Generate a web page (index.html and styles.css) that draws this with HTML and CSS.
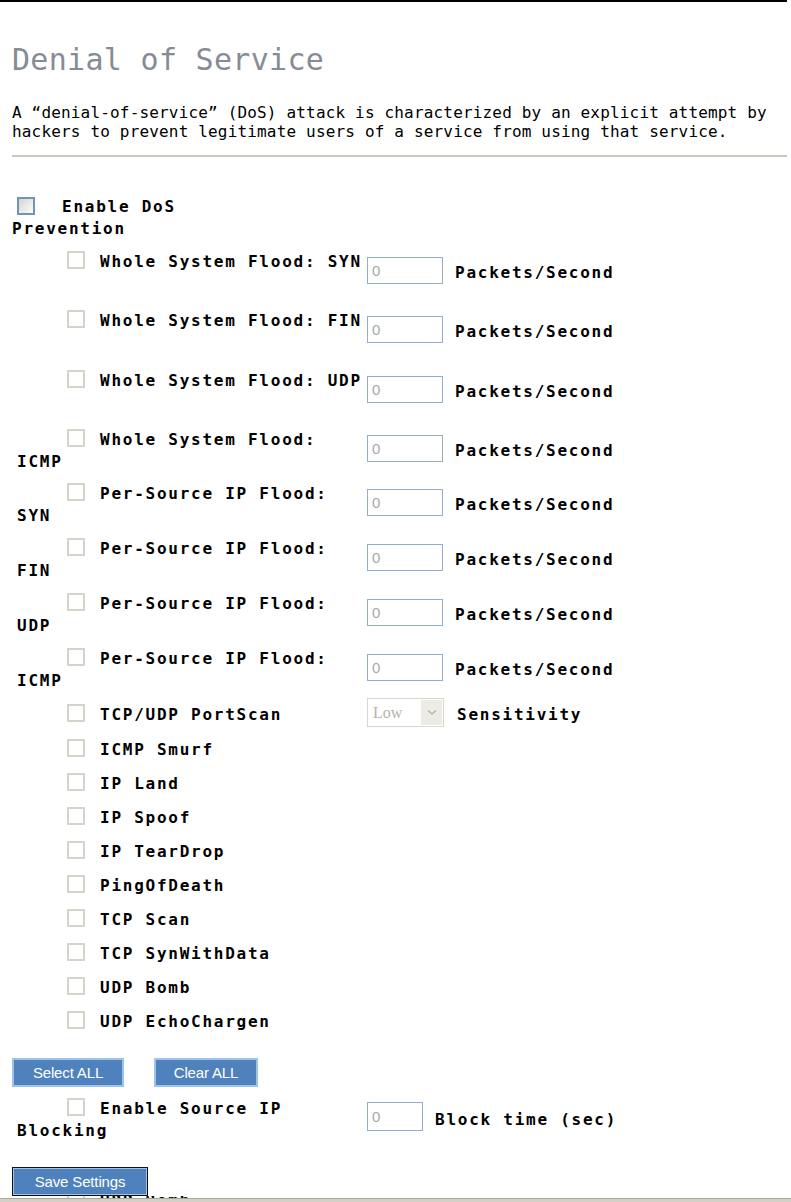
FILE: index.html
```html
<!DOCTYPE html>
<html>
<head>
<meta charset="utf-8">
<title>Denial of Service</title>
<link rel="stylesheet" href="styles.css">
</head>
<body>
<div class="topbar"></div>
<div class="content">
  <h1 class="title">Denial of Service</h1>
  <p class="desc">A “denial-of-service” (DoS) attack is characterized by an explicit attempt by<br>hackers to prevent legitimate users of a service from using that service.</p>
  <div class="rule"></div>

  <div class="enable lbl"><span class="cb cb-on"></span>Enable DoS<br>Prevention</div>

  <div class="frow m11">
    <div class="lab lbl"><span class="cb"></span>Whole System Flood: SYN</div>
    <input class="field" type="text" value="0" disabled>
    <span class="unit lbl">Packets/Second</span>
  </div>
  <div class="frow m15">
    <div class="lab lbl"><span class="cb"></span>Whole System Flood: FIN</div>
    <input class="field" type="text" value="0" disabled>
    <span class="unit lbl">Packets/Second</span>
  </div>
  <div class="frow m16">
    <div class="lab lbl"><span class="cb"></span>Whole System Flood: UDP</div>
    <input class="field" type="text" value="0" disabled>
    <span class="unit lbl">Packets/Second</span>
  </div>
  <div class="frow m15">
    <div class="lab lbl"><span class="cb"></span>Whole System Flood:<br>ICMP</div>
    <input class="field" type="text" value="0" disabled>
    <span class="unit lbl">Packets/Second</span>
  </div>
  <div class="frow m10">
    <div class="lab lbl"><span class="cb"></span>Per-Source IP Flood:<br>SYN</div>
    <input class="field" type="text" value="0" disabled>
    <span class="unit lbl">Packets/Second</span>
  </div>
  <div class="frow m11">
    <div class="lab lbl"><span class="cb"></span>Per-Source IP Flood:<br>FIN</div>
    <input class="field" type="text" value="0" disabled>
    <span class="unit lbl">Packets/Second</span>
  </div>
  <div class="frow m11">
    <div class="lab lbl"><span class="cb"></span>Per-Source IP Flood:<br>UDP</div>
    <input class="field" type="text" value="0" disabled>
    <span class="unit lbl">Packets/Second</span>
  </div>
  <div class="frow m11">
    <div class="lab lbl"><span class="cb"></span>Per-Source IP Flood:<br>ICMP</div>
    <input class="field" type="text" value="0" disabled>
    <span class="unit lbl">Packets/Second</span>
  </div>

  <div class="frow m6">
    <div class="lab lab-one lbl"><span class="cb"></span>TCP/UDP PortScan</div>
    <div class="sel">
      <span class="sel-text">Low</span>
      <span class="sel-arrow"><svg width="10" height="7" viewBox="0 0 10 7"><path d="M1 1.5 L5 5 L9 1.5" fill="none" stroke="#b9b7b0" stroke-width="1.6"/></svg></span>
    </div>
    <span class="unit unit-sens lbl">Sensitivity</span>
  </div>

  <div class="srow lbl m8"><span class="cb"></span>ICMP Smurf</div>
  <div class="srow lbl m12"><span class="cb"></span>IP Land</div>
  <div class="srow lbl m12"><span class="cb"></span>IP Spoof</div>
  <div class="srow lbl m12"><span class="cb"></span>IP TearDrop</div>
  <div class="srow lbl m12"><span class="cb"></span>PingOfDeath</div>
  <div class="srow lbl m12"><span class="cb"></span>TCP Scan</div>
  <div class="srow lbl m12"><span class="cb"></span>TCP SynWithData</div>
  <div class="srow lbl m12"><span class="cb"></span>UDP Bomb</div>
  <div class="srow lbl m12"><span class="cb"></span>UDP EchoChargen</div>

  <div class="btns">
    <button class="btn btn-select" type="button">Select ALL</button>
    <button class="btn btn-clear" type="button">Clear ALL</button>
  </div>

  <div class="frow m11">
    <div class="lab lbl"><span class="cb"></span>Enable Source IP<br>Blocking</div>
    <input class="field field-short" type="text" value="0" disabled>
    <span class="unit lbl">Block time (sec)</span>
  </div>

  <div class="save-row">
    <button class="btn btn-save" type="button">Save Settings</button>
  </div>
  <div class="ghost">
    <div class="ghost-inner srow lbl"><span class="cb"></span>UDP Bomb</div>
  </div>
</div>
<div class="bottom"></div>
</body>
</html>
```
FILE: styles.css
```css
html, body {
  margin: 0;
  padding: 0;
  background: #ffffff;
  color: #000000;
  font-family: "DejaVu Sans Mono", monospace;
}

.topbar {
  width: 787px;
  height: 2px;
  background: #000000;
}

.content {
  width: 787px;
  box-sizing: border-box;
  padding-left: 12px;
}

.title {
  margin: 40px 0 0;
  font-size: 30px;
  line-height: 36px;
  font-weight: normal;
  color: #868c96;
  letter-spacing: 0.3px;
}

.desc {
  margin: 25px 0 0;
  font-size: 16px;
  line-height: 19px;
  letter-spacing: 0.17px;
}

.rule {
  margin-top: 14px;
  height: 2px;
  background: #ccc8bf;
}

.lbl {
  font-size: 16px;
  font-weight: bold;
  line-height: 22px;
  letter-spacing: 1.75px;
  white-space: nowrap;
}

.cb {
  display: inline-block;
  width: 18px;
  height: 18px;
  box-sizing: border-box;
  border: 2px solid #d6d3ca;
  background: #ffffff;
  vertical-align: top;
  margin-left: 50px;
  margin-right: 15px;
}

.enable {
  margin-top: 39px;
}

.enable .cb {
  margin-left: 5px;
  margin-right: 27px;
  margin-top: 1px;
  border-color: #7095b9;
  background: linear-gradient(135deg, #d6d6d0, #fbfbf9);
}

.frow {
  display: flex;
  align-items: center;
}

.lab {
  width: 355px;
  min-height: 44px;
  box-sizing: border-box;
  padding-left: 5px;
  flex: none;
}

.lab-one {
  min-height: 22px;
}

.field {
  width: 76px;
  height: 27px;
  margin: 0 0 6px 0;
  box-sizing: border-box;
  border: 1px solid #93aecc;
  padding: 0 0 0 4px;
  background: #ffffff;
  color: #aba89f;
  font-family: "Liberation Sans", sans-serif;
  font-size: 15px;
  flex: none;
}

.field-short {
  width: 56px;
  height: 29px;
  margin-bottom: 7px;
}

.unit {
  margin-left: 12px;
}

.unit-sens {
  margin-left: 13px;
}

.sel {
  display: flex;
  width: 77px;
  height: 29px;
  box-sizing: border-box;
  border: 1px solid #dad6cb;
  margin-bottom: 4px;
  background: #ffffff;
  flex: none;
}

.sel-text {
  flex: 1;
  padding-left: 5px;
  font-family: "Liberation Serif", serif;
  font-size: 16px;
  line-height: 27px;
  color: #b7b3a7;
}

.sel-arrow {
  width: 21px;
  margin: 1px;
  background: #ecebe6;
  display: flex;
  align-items: center;
  justify-content: center;
}

.srow {
  height: 22px;
  padding-left: 5px;
}

.m6 { margin-top: 6px; }
.m8 { margin-top: 8px; }
.m10 { margin-top: 10px; }
.m11 { margin-top: 11px; }
.m12 { margin-top: 12px; }
.m15 { margin-top: 15px; }
.m16 { margin-top: 16px; }

.btns {
  display: flex;
  gap: 30px;
  margin-top: 25px;
}

.btn {
  height: 29px;
  box-sizing: border-box;
  border: 2px solid #9fc4eb;
  background: #4f81bd;
  color: #ffffff;
  font-family: "Liberation Sans", sans-serif;
  font-size: 15px;
  letter-spacing: -0.15px;
  padding: 0;
  margin: 0;
}

.btn-select { width: 112px; }
.btn-clear { width: 104px; }

.save-row {
  margin-top: 25px;
  display: flex;
}

.btn-save {
  width: 136px;
  border: 1px solid #111111;
  box-shadow: inset 0 0 0 1px #9fc4eb;
}

.ghost {
  height: 2px;
  overflow: hidden;
}

.ghost-inner {
  margin-top: -6px;
}

.bottom {
  width: 791px;
  height: 4px;
  box-sizing: border-box;
  border-top: 1px solid #aaa698;
  background: #d4d0c8;
}
```
